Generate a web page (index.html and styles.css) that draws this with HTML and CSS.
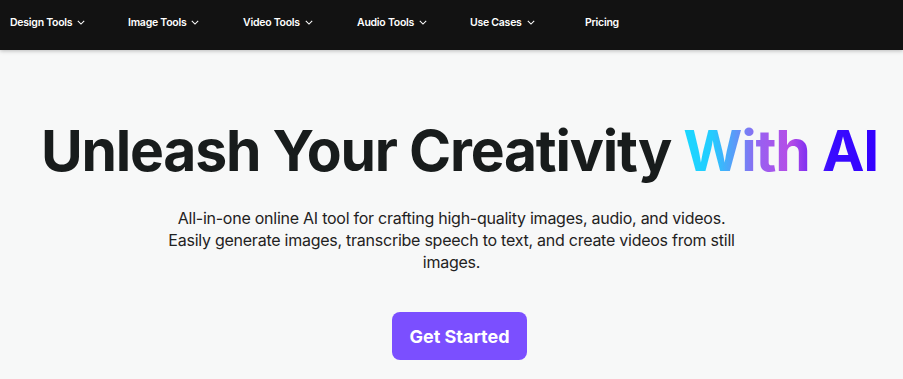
FILE: index.html
```html
<!DOCTYPE html>
<html>
<head>
<meta charset="utf-8">
<link rel="stylesheet" href="styles.css">
</head>
<body>
<nav class="nav">
  <a class="nav-item">Design Tools <svg class="chev" viewBox="0 0 10 6"><path d="M1 1l4 4 4-4"/></svg></a>
  <a class="nav-item">Image Tools <svg class="chev" viewBox="0 0 10 6"><path d="M1 1l4 4 4-4"/></svg></a>
  <a class="nav-item">Video Tools <svg class="chev" viewBox="0 0 10 6"><path d="M1 1l4 4 4-4"/></svg></a>
  <a class="nav-item">Audio Tools <svg class="chev" viewBox="0 0 10 6"><path d="M1 1l4 4 4-4"/></svg></a>
  <a class="nav-item">Use Cases <svg class="chev" viewBox="0 0 10 6"><path d="M1 1l4 4 4-4"/></svg></a>
  <a class="nav-item">Pricing</a>
</nav>
<main class="hero">
  <h1 class="title">Unleash Your Creativity <span class="grad">With AI</span></h1>
  <p class="lead">All-in-one online AI tool for crafting high-quality images, audio, and videos.<br>Easily generate images, transcribe speech to text, and create videos from still images.</p>
  <button class="cta">Get Started</button>
</main>
</body>
</html>
```
FILE: styles.css
```css
* { box-sizing: border-box; }
html, body { margin: 0; padding: 0; }
body {
  background: #f7f8f8;
  font-family: Inter, "Noto Sans", sans-serif;
  width: 903px;
  height: 379px;
  overflow: hidden;
}
.nav {
  height: 50px;
  background: #121212;
  display: flex;
  align-items: center;
  padding-left: 10px;
  padding-bottom: 6px;
  box-shadow: 0 1px 4px rgba(0,0,0,0.25);
  position: relative;
}
.nav-item {
  color: #fff;
  font-size: 10.5px;
  font-weight: 600;
  display: flex;
  align-items: center;
  gap: 5px;
  letter-spacing: -0.25px;
}
.nav-item:nth-child(1) { width: 118px; }
.nav-item:nth-child(2) { width: 115px; }
.nav-item:nth-child(3) { width: 114px; }
.nav-item:nth-child(4) { width: 113px; }
.nav-item:nth-child(5) { width: 115px; }
.chev {
  width: 8px;
  height: 5px;
  fill: none;
  stroke: #fff;
  stroke-width: 1.3;
}
.hero {
  display: flex;
  flex-direction: column;
  align-items: center;
  padding-top: 64px;
}
.title {
  margin: 0 0 0 16px;
  font-size: 57px;
  font-weight: 700;
  color: #181c1c;
  letter-spacing: -1.2px;
  line-height: 74px;
  white-space: nowrap;
}
.grad {
  background: linear-gradient(90deg, #1ad8ff 0%, #24ccff 15%, #9a5ff0 40%, #b64de6 55%, #3a0cff 75%, #3300ff 100%);
  -webkit-background-clip: text;
  background-clip: text;
  color: transparent;
}
.lead {
  margin: 19px 0 0;
  width: 600px;
  text-align: center;
  font-size: 16px;
  line-height: 22px;
  color: #1f2222;
  letter-spacing: -0.25px;
}
.cta {
  margin-top: 39px;
  margin-left: 16px;
  width: 135px;
  height: 48px;
  border: none;
  border-radius: 8px;
  background: #7b4fff;
  color: #fff;
  font-family: Inter, sans-serif;
  font-size: 18px;
  font-weight: 700;
}
```
